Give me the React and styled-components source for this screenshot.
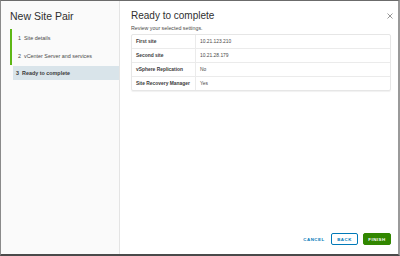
import styled, { createGlobalStyle } from 'styled-components'

const GlobalStyle = createGlobalStyle`
  html, body {
    margin: 0;
    padding: 0;
    background: #ffffff;
  }
  body {
    font-family: 'Liberation Sans', Arial, sans-serif;
    color: #313131;
  }
`

const Frame = styled.div`
  width: 400px;
  height: 256px;
  box-sizing: border-box;
  border-top: 1px solid #6b6b6b;
  border-left: 1px solid #8a8a8a;
  border-right: 2px solid #9a9a9a;
  border-bottom: 2px solid #4a4a4a;
  display: flex;
  overflow: hidden;
`

const Sidebar = styled.div`
  width: 119px;
  flex-shrink: 0;
  background: #fafafa;
  border-right: 1px solid #e4e4e4;
  box-sizing: border-box;
  padding: 9px 0 0 9px;
`

const WizardTitle = styled.div`
  font-size: 10.5px;
  line-height: 12px;
  color: #2f2f2f;
  margin-bottom: 7px;
`

const StepList = styled.div`
  display: flex;
  flex-direction: column;
`

const Step = styled.div`
  height: 18px;
  display: flex;
  align-items: center;
  padding-left: 6px;
  font-size: 5.4px;
  color: #4a4a4a;
  white-space: nowrap;
  border-left: 2px solid ${({ $done }) => ($done ? '#5eb715' : 'transparent')};
`

const ActiveStep = styled.div`
  height: 14px;
  margin: 1px 0 0 3px;
  display: flex;
  align-items: center;
  padding-left: 3px;
  font-size: 5.4px;
  font-weight: bold;
  color: #3a3a3a;
  white-space: nowrap;
  background: #d9e4ea;
`

const StepNum = styled.span`
  margin-right: 3px;
`

const Main = styled.div`
  flex: 1;
  display: flex;
  flex-direction: column;
  padding: 9px 9px 9px 11px;
`

const Header = styled.div`
  display: flex;
  justify-content: space-between;
  align-items: center;
  height: 12px;
`

const Title = styled.div`
  font-size: 10px;
  line-height: 12px;
  color: #2f2f2f;
`

const Close = styled.div`
  width: 8px;
  height: 8px;
  margin-top: 0;
  margin-right: -3px;
  line-height: 0;
  svg {
    display: block;
  }
`

const Subtitle = styled.div`
  font-size: 5.3px;
  line-height: 7px;
  color: #4a4a4a;
  margin-top: 3px;
  margin-bottom: 2px;
`

const Table = styled.div`
  border: 1px solid #e6e6e6;
  border-radius: 2px;
  width: 258px;
  box-shadow: 0 1px 1px rgba(0, 0, 0, 0.06);
`

const Row = styled.div`
  display: grid;
  grid-template-columns: 64px 1fr;
  height: 13px;
  border-top: ${({ $first }) => ($first ? 'none' : '1px solid #ebebeb')};
  font-size: 4.9px;
  white-space: nowrap;
`

const Label = styled.div`
  display: flex;
  align-items: center;
  padding-left: 4px;
  font-weight: bold;
  color: #3a3a3a;
  border-right: 1px solid #ebebeb;
`

const Value = styled.div`
  display: flex;
  align-items: center;
  padding-left: 4px;
  color: #4a4a4a;
`

const Footer = styled.div`
  margin-top: auto;
  display: flex;
  justify-content: flex-end;
  align-items: center;
  gap: 5px;
`

const Button = styled.div`
  height: 12px;
  box-sizing: border-box;
  display: flex;
  align-items: center;
  justify-content: center;
  font-size: 4.4px;
  font-weight: bold;
  letter-spacing: 0.5px;
  border-radius: 2px;
  color: ${({ $kind }) => ($kind === 'primary' ? '#ffffff' : '#0079b8')};
  background: ${({ $kind }) => ($kind === 'primary' ? '#318700' : '#ffffff')};
  border: 1px solid
    ${({ $kind }) =>
      $kind === 'primary' ? '#318700' : $kind === 'outline' ? '#0079b8' : 'transparent'};
  width: ${({ $w }) => $w}px;
`

const rows = [
  ['First site', '10.21.123.210'],
  ['Second site', '10.21.28.179'],
  ['vSphere Replication', 'No'],
  ['Site Recovery Manager', 'Yes'],
]

export default function App() {
  return (
    <>
      <GlobalStyle />
      <Frame>
        <Sidebar>
          <WizardTitle>New Site Pair</WizardTitle>
          <StepList>
            <Step $done>
              <StepNum>1</StepNum>Site details
            </Step>
            <Step $done>
              <StepNum>2</StepNum>vCenter Server and services
            </Step>
            <ActiveStep>
              <StepNum>3</StepNum>Ready to complete
            </ActiveStep>
          </StepList>
        </Sidebar>
        <Main>
          <Header>
            <Title>Ready to complete</Title>
            <Close>
              <svg width="8" height="8" viewBox="0 0 8 8">
                <path d="M1.5 1.5 L6.5 6.5 M6.5 1.5 L1.5 6.5" stroke="#8c8c8c" strokeWidth="0.9" />
              </svg>
            </Close>
          </Header>
          <Subtitle>Review your selected settings.</Subtitle>
          <Table>
            {rows.map(([k, v], i) => (
              <Row key={k} $first={i === 0}>
                <Label>{k}</Label>
                <Value>{v}</Value>
              </Row>
            ))}
          </Table>
          <Footer>
            <Button $w={24}>CANCEL</Button>
            <Button $kind="outline" $w={27}>BACK</Button>
            <Button $kind="primary" $w={28}>FINISH</Button>
          </Footer>
        </Main>
      </Frame>
    </>
  )
}
